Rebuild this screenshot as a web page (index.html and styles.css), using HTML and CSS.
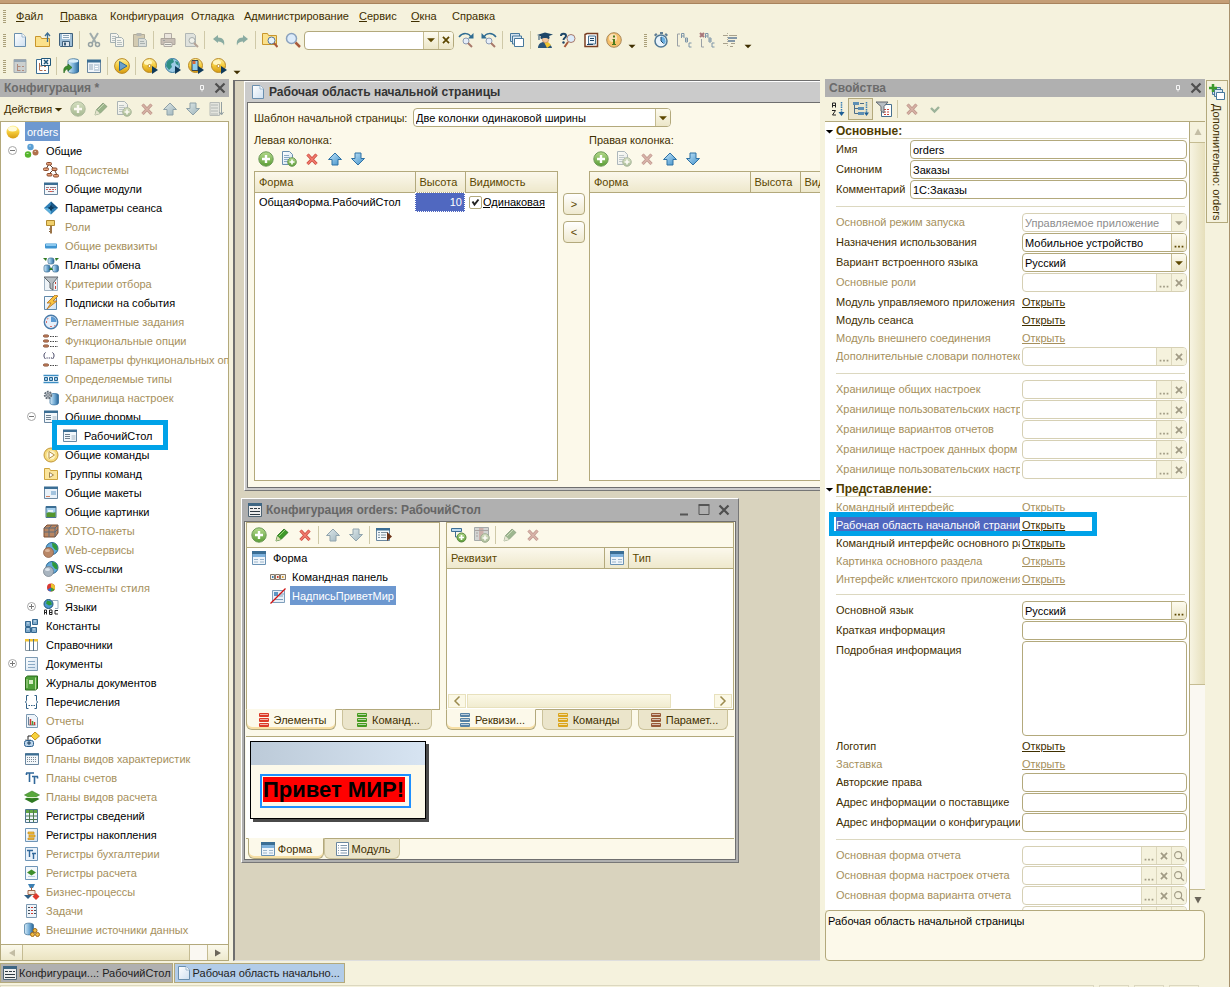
FILE: index.html
```html
<!DOCTYPE html>
<html lang="ru">
<head>
<meta charset="utf-8">
<title>Конфигуратор</title>
<link rel="stylesheet" href="styles.css">
</head>
<body>
<svg class="defs" aria-hidden="true">
<defs>
<linearGradient id="gPaper" x1="0" y1="0" x2="1" y2="1"><stop offset="0" stop-color="#fff"/><stop offset="1" stop-color="#cfe0f0"/></linearGradient>
<linearGradient id="gGold" x1="0" y1="0" x2="0" y2="1"><stop offset="0" stop-color="#fff3a0"/><stop offset=".5" stop-color="#f5cc3c"/><stop offset="1" stop-color="#d69a10"/></linearGradient>
<linearGradient id="gGreen" x1="0" y1="0" x2="0" y2="1"><stop offset="0" stop-color="#b5da8c"/><stop offset="1" stop-color="#5a9d35"/></linearGradient>
<linearGradient id="gBlue" x1="0" y1="0" x2="1" y2="1"><stop offset="0" stop-color="#c4e6fa"/><stop offset="1" stop-color="#3f8fc8"/></linearGradient>
<linearGradient id="gCyl" x1="0" y1="0" x2="1" y2="0"><stop offset="0" stop-color="#d8ecf8"/><stop offset=".5" stop-color="#79b0d8"/><stop offset="1" stop-color="#276496"/></linearGradient>
</defs>
<symbol id="doc" viewBox="0 0 16 16"><path d="M2.500 1.500h7.500l3.500 3.500v9.500h-11z" fill="url(#gPaper)" stroke="#6a8fae"/><path d="M10 1.500v3.500h3.500" fill="#fff" stroke="#9db8cf"/></symbol>
<symbol id="open" viewBox="0 0 16 16"><path d="M.5 14.500v-10h5l1 2h8v8z" fill="#fbe18a" stroke="#c9962c"/><path d="M12.500 10V2M10 4l2.500-3L15 4" fill="none" stroke="#3b6e94" stroke-width="1.300"/></symbol>
<symbol id="save" viewBox="0 0 16 16"><path d="M1.500 1.500h13v13h-12l-1-1z" fill="#9fbfd8" stroke="#3f617d"/><path d="M4 2h8v5H4z" fill="#f5f9fc"/><path d="M5 3.500h6M5 5.500h6" stroke="#8aa4b8"/><path d="M4.500 9.500h7v5h-7z" fill="#dfe7ee" stroke="#3f617d"/><path d="M6 10.500h2v3H6z" fill="#3f617d"/></symbol>
<symbol id="cut" viewBox="0 0 16 16"><path d="M4 1l6 10M12 1L6 11" stroke="#57819f" stroke-width="2"/><circle cx="4.500" cy="12.500" r="2" fill="none" stroke="#47708f" stroke-width="1.500"/><circle cx="11.500" cy="12.500" r="2" fill="none" stroke="#47708f" stroke-width="1.500"/></symbol>
<symbol id="copy" viewBox="0 0 16 16"><path d="M1.500 1.500h6l2 2v7h-8z" fill="#f4f8fc" stroke="#5f88aa"/><path d="M3 4.500h4M3 6.500h5M3 8.500h3" stroke="#7fa0bc"/><path d="M6.500 5.500h6l2 2v7h-8z" fill="#f4f8fc" stroke="#5f88aa"/><path d="M8 8.500h4M8 10.500h5M8 12.500h5" stroke="#7fa0bc"/></symbol>
<symbol id="paste" viewBox="0 0 16 16"><path d="M1.500 2.500h11v12h-11z" fill="#c9b27c" stroke="#8f7d50"/><path d="M4.500 1h5v3h-5z" fill="#8a9298"/><path d="M6.500 6.500h6l2 2v6h-8z" fill="#c2d4e4" stroke="#6b8aa5"/><path d="M8 9.500h4M8 11.500h5" stroke="#6b8aa5"/></symbol>
<symbol id="print" viewBox="0 0 16 16"><path d="M4.500 1.500h7v5h-7z" fill="#e8dcdc" stroke="#8a7a80"/><path d="M1 6.500h14v6H1z" fill="#b59a98" stroke="#86706f"/><path d="M4 10.500h8v4H4z" fill="#f3f0ee" stroke="#8a7a80"/><path d="M3 8.500h2M5 12.500h6" stroke="#5d6c80"/></symbol>
<symbol id="preview" viewBox="0 0 16 16"><path d="M2.500 1.500h8l2 2v11h-10z" fill="#ccd9e4" stroke="#7b93a6"/><circle cx="9" cy="8.500" r="3" fill="#e9f2f8" stroke="#68839a"/><path d="M11 11l4 4" stroke="#a26a5a" stroke-width="2"/></symbol>
<symbol id="undo" viewBox="0 0 16 16"><path d="M2 7l5-4v2.500c5 0 7 3 6 8-1-3-3-4-6-4V11z" fill="#8aaca2"/></symbol>
<symbol id="redo" viewBox="0 0 16 16"><path d="M14 7L9 3v2.500c-5 0-7 3-6 8 1-3 3-4 6-4V11z" fill="#8aaca2"/></symbol>
<symbol id="findf" viewBox="0 0 16 16"><path d="M.5 12.500v-11h5l1 2h8v9z" fill="#fbe18a" stroke="#c9962c"/><circle cx="9.500" cy="8.500" r="3.500" fill="#e6f2fb" stroke="#57779a"/><path d="M12 11l3.500 4" stroke="#a8593a" stroke-width="2"/></symbol>
<symbol id="find" viewBox="0 0 16 16"><circle cx="6.500" cy="6.500" r="5" fill="#dcebfa" stroke="#8ba2bd" stroke-width="1.500"/><path d="M10.500 10.500l4.500 4.500" stroke="#a8593a" stroke-width="2.500"/></symbol>
<symbol id="fnext" viewBox="0 0 16 16"><path d="M1 5c4-5 10-4 12 0" fill="none" stroke="#2f6c92" stroke-width="1.500"/><path d="M15.500 1v5.500H10z" fill="#2f6c92"/><circle cx="8" cy="9" r="3" fill="#e6eef8" stroke="#8a9ab4"/><path d="M10 11l4 4" stroke="#a8796a" stroke-width="2"/></symbol>
<symbol id="fprev" viewBox="0 0 16 16"><path d="M15 5C11 0 5 1 3 5" fill="none" stroke="#2f6c92" stroke-width="1.500"/><path d="M.5 1v5.500H6z" fill="#2f6c92"/><circle cx="8" cy="9" r="3" fill="#e6eef8" stroke="#8a9ab4"/><path d="M10 11l4 4" stroke="#a8796a" stroke-width="2"/></symbol>
<symbol id="wins" viewBox="0 0 16 16"><path d="M1.500 1.500h9v8h-9z" fill="#cfe0ee" stroke="#47789c"/><path d="M3.500 4h9v8h-9z" fill="#dbe8f3" stroke="#47789c"/><path d="M5.500 6.500h9v8h-9z" fill="#fff" stroke="#47789c"/></symbol>
<symbol id="student" viewBox="0 0 16 16"><path d="M1 16c0-4 3-6 6-6s7 2 8 6z" fill="#2a5478"/><path d="M7 10l3 6 4-3-3-3z" fill="#f2c52e"/><circle cx="8.500" cy="7.500" r="3.200" fill="#f3c9a0" stroke="#b8805a" stroke-width=".6"/><path d="M0 3l8-2.500 8 2-8 3z" fill="#1d4668"/><path d="M4 4.500h8v2c-3-1.500-5-1.500-8 0zM2 4v4" fill="#1d4668" stroke="#1d4668"/></symbol>
<symbol id="qfind" viewBox="0 0 16 16"><path d="M1 4c0-3 5-3 5 0 0 2-2.500 1.500-2.500 4" fill="none" stroke="#1d4668" stroke-width="2"/><circle cx="3.500" cy="10.500" r="1.200" fill="#1d4668"/><circle cx="11" cy="6.500" r="4" fill="#dcebfa" stroke="#a8796a"/><path d="M8 10l-3.500 5" stroke="#a8593a" stroke-width="2"/></symbol>
<symbol id="book" viewBox="0 0 16 16"><path d="M2 2.500l2-1h10.500v13H2z" fill="#fff" stroke="#7a3f22" stroke-width="1.500"/><path d="M5.500 4h7v8h-7z" fill="#eef4fa" stroke="#47708f"/><path d="M7 6.500h4M7 8.500h4M4 12.500h6" stroke="#1d4668"/></symbol>
<symbol id="info" viewBox="0 0 16 16"><circle cx="8" cy="8" r="7.300" fill="#f6c06a" stroke="#a9885a"/><circle cx="7" cy="6" r="4" fill="#fbe3b8"/><path d="M7 3.500h2v2H7zM6.500 7H9v5h1v1H6v-1h1V8h-.5z" fill="#4b7a1e"/></symbol>
<symbol id="watch" viewBox="0 0 16 16"><path d="M7 0h3v2H7zM1 3l2-2 1.500 1.500L2.500 4.500zM15 3l-2-2-1.500 1.500 2 2z" fill="#5f7d94"/><circle cx="8" cy="9" r="6" fill="#e9f4fc" stroke="#4f7896" stroke-width="1.500"/><path d="M8 9V4.500A4.500 4.500 0 0 1 11.500 12z" fill="#68aee0"/><path d="M8 5v4l2.500 2.500" fill="none" stroke="#1d4668"/></symbol>
<symbol id="abc" viewBox="0 0 16 16"><path d="M4 2H1.500v12H4" fill="none" stroke="#9aa1a6"/><path d="M5.500 6V1.500h2.500V6M5.500 4H8M9.500 6v4h2V6zM9.500 8h2M15.500 11H13v4h2.500" fill="none" stroke="#7d95a8"/></symbol>
<symbol id="abcx" viewBox="0 0 16 16"><path d="M2.500 7v8H5" fill="none" stroke="#9aa1a6"/><path d="M6.500 6V1.500H9V6M6.500 4H9M10 6v4h2V6zM10 8h2M15.500 11H13v4h2.500" fill="none" stroke="#7d95a8"/><path d="M1 1l4 4M5 1L1 5" stroke="#a8777a" stroke-width="2"/></symbol>
<symbol id="indent" viewBox="0 0 16 16"><path d="M1 3.500h4M7 3.500h8M1 11.500h4M9 11.500h4M8 14.500h3" stroke="#a8a18c"/><path d="M6 6h9M6 9h7" stroke="#8498a8" stroke-width="2"/><path d="M5.500 1v14" stroke="#b5b09c" stroke-dasharray="1 1"/></symbol>
<symbol id="treeg" viewBox="0 0 16 16"><path d="M2 1.500h12v13H2z" fill="#ccd0cf" stroke="#a2aaaf"/><path d="M2 3h12" stroke="#93a5b3" stroke-width="2"/><path d="M5.500 6v7M5.500 8.500h3M5.500 12.500h3M10 8.500h2M10 12.500h2" stroke="#b08a7a"/></symbol>
<symbol id="treex" viewBox="0 0 16 16"><path d="M1.500 1.500h12v14h-12z" fill="#fff" stroke="#3b6e94"/><path d="M4.500 5v7M4.500 8h3M4.500 12.500h3M9 8.500h2M9 12.500h2" stroke="#b06a4a"/><path d="M6.500.5h9v7h-9z" fill="#f2f7fb" stroke="#1f5579"/><path d="M9 2l4 4M13 2L9 6" stroke="#1f5579" stroke-width="1.500"/></symbol>
<symbol id="dbup" viewBox="0 0 16 16"><path d="M5 3c0-3 11-3 11 0v10c0 3-11 3-11 0z" fill="url(#gCyl)" stroke="#2f668f" stroke-width=".7"/><ellipse cx="10.500" cy="3" rx="5" ry="1.700" fill="#d9edf8"/><path d="M1 15c-1-5 1-7 4-7V6l4 3.500L5 13v-2c-2 0-3 1-4 4z" fill="#3d8c2f" stroke="#23651b" stroke-width=".6"/></symbol>
<symbol id="formw" viewBox="0 0 16 16"><path d="M1.500 2.500h13v12h-13z" fill="#f0f5fa" stroke="#6a87a0"/><path d="M1 1.500h14v3H1z" fill="#3b6e94"/><path d="M3 7h4M3 9h4M3 11h4" stroke="#93a7b8"/><path d="M8 6h5.500v7H8z" fill="#c5d3df"/><path d="M9 8.500h3M9 10.500h3" stroke="#fff"/></symbol>
<symbol id="play" viewBox="0 0 16 16"><circle cx="8" cy="8" r="7.400" fill="url(#gGold)" stroke="#b98a28"/><path d="M5.500 3.500L13 8l-7.500 4.500z" fill="#6aa0cc" stroke="#2f6c9a"/></symbol>
<symbol id="runcd" viewBox="0 0 16 16"><circle cx="7.500" cy="7.500" r="7" fill="url(#gGold)" stroke="#b98a28"/><ellipse cx="6" cy="4.500" rx="4" ry="2.500" fill="#fff6c0"/><circle cx="7.500" cy="8" r="1.500" fill="#fff" stroke="#b98a28"/><path d="M10 8l6 4-6 4z" fill="#0f3a5a"/></symbol>
<symbol id="runweb" viewBox="0 0 16 16"><circle cx="7.500" cy="7.500" r="7" fill="#9ccbe6" stroke="#37799e"/><path d="M2 4c2-3 5-3 6-3l1 3-3 2 1 3-3 3-3-4zM10 3l3 1 1 4-3-2z" fill="#2f8f84"/><path d="M10 8l6 4-6 4z" fill="#0f3a5a"/></symbol>
<symbol id="runmob" viewBox="0 0 16 16"><circle cx="7.500" cy="7.500" r="7" fill="url(#gGold)" stroke="#b98a28"/><path d="M4 2.500h6v10H4z" fill="#8fd0ef" stroke="#3a4750"/><path d="M4.500 3h3v3h-3z" fill="#d96a3a"/><path d="M10 8l6 4-6 4z" fill="#0f3a5a"/></symbol>
<symbol id="add" viewBox="0 0 16 16"><circle cx="8" cy="8" r="7.200" fill="url(#gGreen)" stroke="#6d9a58"/><path d="M8 4v8M4 8h8" stroke="#fff" stroke-width="2.400"/></symbol>
<symbol id="pencil" viewBox="0 0 16 16"><path d="M2 14l1.500-5.500L10 2l4 3.500-7 7z" fill="#3f9a2a" stroke="#256b1a" stroke-width=".8"/><path d="M2 14l1.500-5L7 12.500z" fill="#d9ddb0"/><path d="M5 9l6-6" stroke="#9bd27a"/></symbol>
<symbol id="docadd" viewBox="0 0 16 16"><path d="M1.500.5h7l3 3v10h-10z" fill="url(#gPaper)" stroke="#6a8fae"/><path d="M3 4.500h5M3 6.500h6M3 8.500h4M3 10.500h4" stroke="#8aa9c4"/><circle cx="11" cy="11" r="4.300" fill="url(#gGreen)" stroke="#6d9a58"/><path d="M11 8.500v5M8.500 11h5" stroke="#fff" stroke-width="1.600"/></symbol>
<symbol id="del" viewBox="0 0 16 16"><path d="M3.500 3.500l9 9.500M12.500 3.500l-9 9.500" stroke="#c9483e" stroke-width="3.200"/><path d="M3.500 3.500l9 9.500M12.500 3.500l-9 9.500" stroke="#f07a6c" stroke-width="1.800"/></symbol>
<symbol id="up" viewBox="0 0 16 16"><path d="M8 2l6.500 6.500H11V14H5V8.500H1.500z" fill="url(#gBlue)" stroke="#2f72a5"/></symbol>
<symbol id="down" viewBox="0 0 16 16"><path d="M8 14L1.500 7.500H5V2h6v5.500h3.500z" fill="url(#gBlue)" stroke="#2f72a5"/></symbol>
<symbol id="sortl" viewBox="0 0 16 16"><path d="M2 1.500h9.500v13H2z" fill="#d5dde4" stroke="#8698a8"/><path d="M3 4h7M3 7h7M3 10h7M3 13h7" stroke="#7e92a4"/><path d="M13.500 1v12M11.500 11l2 3 2-3" fill="none" stroke="#3f6f95"/></symbol>
<symbol id="gold" viewBox="0 0 16 16"><circle cx="8" cy="8" r="6.500" fill="url(#gGold)"/><ellipse cx="7.500" cy="5" rx="4.500" ry="2.500" fill="#fffbd8"/></symbol>
<symbol id="common" viewBox="0 0 16 16"><circle cx="6.500" cy="4" r="3.200" fill="#5a9fd4"/><circle cx="4" cy="11.500" r="3.200" fill="#55b52c"/><circle cx="11.500" cy="9.500" r="3" fill="#b0714c"/><path d="M5 3h2M2.500 10.500h2M10.500 8.500h1.500" stroke="#fff" opacity=".6"/></symbol>
<symbol id="subsys" viewBox="0 0 16 16"><path d="M6 2L3 7M6 2l5 5M11 7l-5 5M11 7l3 6" stroke="#5b4030"/><g fill="#e7a27c" stroke="#8a4a2c"><rect x="3.500" y=".5" width="5" height="2.500" rx="1"/><rect x=".5" y="6" width="5" height="2.500" rx="1"/><rect x="9" y="6" width="5" height="2.500" rx="1"/><rect x="4" y="11.500" width="5" height="2.500" rx="1"/><rect x="10.500" y="12.500" width="5" height="2.500" rx="1"/></g></symbol>
<symbol id="module" viewBox="0 0 16 16"><path d="M1.500 2.500h13v11h-13z" fill="#f2f7fb" stroke="#6a87a0"/><path d="M1 1.500h14v2.500H1z" fill="#3b6e94"/><path d="M3 6.500h3M7 6.500h6M5 10.500h6" stroke="#8e7a86"/><path d="M3 8.500h10M7 10.500h2" stroke="#e0584c" stroke-dasharray="2 1"/></symbol>
<symbol id="diamond" viewBox="0 0 16 16"><path d="M8 1.500l7 6.500-7 6.500L1 8z" fill="#2f7fb5"/><path d="M8 1.500L15 8H8z" fill="#1a5888"/><path d="M1 8h7v6.500z" fill="#5fb0dc"/><path d="M8 5.500v5M5.500 8h5" stroke="#0d3c60" stroke-width="2"/></symbol>
<symbol id="key" viewBox="0 0 16 16"><path d="M3.500 1.500h8v5h-8z" fill="#f0cf6c" stroke="#b08a30"/><path d="M7 7h2v7.500H7z" fill="#9a7448"/><path d="M6 10h1M6 12.500h1" stroke="#7a5a38"/></symbol>
<symbol id="bar" viewBox="0 0 16 16"><rect x="2" y="5.500" width="12" height="5" rx="1" fill="#3f94d0"/><path d="M3 7h10" stroke="#a5dafa" stroke-width="1.500"/></symbol>
<symbol id="exch" viewBox="0 0 16 16"><g fill="url(#gCyl)" stroke="#3a6d93" stroke-width=".7"><rect x="5" y="1" width="6" height="6" rx="2"/><rect x="1" y="8" width="6" height="7" rx="2"/><rect x="9.500" y="8" width="6" height="7" rx="2"/></g><path d="M0 1h4L3 4zM16 1h-4l1 3zM8 10l-2 3h4z" fill="#2f7a22"/></symbol>
<symbol id="filter" viewBox="0 0 16 16"><path d="M1.500 2.500h13v12h-13z" fill="#eef3f7" stroke="#9fb2c2"/><path d="M1 1h14l-5 6v7l-3-2V7z" fill="#b8bfc4" stroke="#62696e"/><path d="M12.500 6v2M12.500 10v3" stroke="#c9463a"/></symbol>
<symbol id="bolt" viewBox="0 0 16 16"><path d="M1.500 1.500h12v13h-12z" fill="url(#gPaper)" stroke="#5f88aa"/><path d="M12 0L4 8h4l-4 6 10-8h-4l5-5z" fill="#f9c440" stroke="#b3701e" stroke-width=".8"/></symbol>
<symbol id="clock" viewBox="0 0 16 16"><circle cx="8" cy="8" r="6.700" fill="#e6effa" stroke="#4a7cab" stroke-width="1.400"/><path d="M8 8V2.500A5.500 5.500 0 0 1 13.500 8z" fill="#5c9ad2"/><path d="M3 8h1M8 12v1M4.500 4.500l.5.500M11.500 11.500l.5.500" stroke="#d94c42" stroke-width="1.500"/></symbol>
<symbol id="fopt" viewBox="0 0 16 16"><g fill="#e09c78" stroke="#7d4327"><rect x=".5" y="2" width="5" height="2" rx="1"/><rect x=".5" y="7" width="5" height="2" rx="1"/><rect x=".5" y="12" width="5" height="2" rx="1"/></g><path d="M7 3.500h8M7 8.500h8M7 13.500h8" stroke="#444" stroke-dasharray="1.500 1"/></symbol>
<symbol id="fparam" viewBox="0 0 16 16"><path d="M2.500.5C.5 2 .5 5 2.500 7M9.500.5c2 1.500 2 4.500 0 6.500" fill="none" stroke="#335"/><path d="M3.500 6h6" stroke="#335" stroke-dasharray="1.200 1"/><rect x=".5" y="12" width="5" height="2" rx="1" fill="#e09c78" stroke="#7d4327"/><path d="M7 13.500h8" stroke="#444" stroke-dasharray="1.500 1"/></symbol>
<symbol id="types" viewBox="0 0 16 16"><path d="M.5 4.500h15M.5 11.500h15" stroke="#3d8fc5" stroke-width="1.500"/><g fill="#9dcdee" stroke="#25638f"><path d="M1.500 6.500h3v3h-3zM6.500 6.500h3v3h-3zM11.500 6.500h3v3h-3z"/></g></symbol>
<symbol id="store" viewBox="0 0 16 16"><path d="M7 5c0-2 8.500-2 8.500 0v8c0 2.500-8.500 2.500-8.500 0z" fill="url(#gCyl)" stroke="#2a6a9c" stroke-width=".7"/><circle cx="5" cy="5" r="3.300" fill="#c6ccd2" stroke="#646e78" stroke-width="1.800" stroke-dasharray="1.800 1"/><circle cx="5" cy="5" r="1.300" fill="#fff" stroke="#646e78"/></symbol>
<symbol id="form" viewBox="0 0 16 16"><path d="M1.500 2.500h13v11h-13z" fill="#f2f7fb" stroke="#6a87a0"/><path d="M1 1.500h14v2.500H1z" fill="#3b6e94"/><path d="M3 6.500h5M3 8.500h5M3 10.500h5" stroke="#6f808e"/><path d="M9.500 7h4v5h-4z" fill="#cbd6df"/></symbol>
<symbol id="gcmd" viewBox="0 0 16 16"><circle cx="8" cy="8" r="7" fill="#f5da7c" stroke="#c2983a"/><circle cx="8" cy="8" r="4.500" fill="#fdf2c4"/><path d="M6 4.500l5.500 3.500L6 11.500z" fill="#fff" stroke="#b8923f"/></symbol>
<symbol id="gfold" viewBox="0 0 16 16"><path d="M1.500 13.500v-11h5l1 2h7v9z" fill="#fbe59c" stroke="#cda43e"/><path d="M6.500 6.500l4 2.500-4 2.500z" fill="#fff" stroke="#a08550"/></symbol>
<symbol id="layout" viewBox="0 0 16 16"><path d="M1.500 2.500h13v11h-13z" fill="#eaf2f9" stroke="#6a87a0"/><path d="M1 1.500h14v2.500H1z" fill="#3b6e94"/><path d="M8 7h5M8 9h5" stroke="#5c95c4"/><path d="M3 11.500h4" stroke="#d08060"/></symbol>
<symbol id="pic" viewBox="0 0 16 16"><path d="M3 2.500h10v11H3z" fill="#a6d0ee" stroke="#4a7393"/><path d="M3 3h10" stroke="#3b6e94" stroke-width="2"/><path d="M3.500 9c3-2 6 1 9-1v5h-9z" fill="#54962e"/><path d="M5 7h5" stroke="#fff" stroke-width="1.500"/></symbol>
<symbol id="xdto" viewBox="0 0 16 16"><path d="M1 5l3-3h11v8l-3 4H1z" fill="#b98662" stroke="#7d4f33"/><path d="M1 5h11v9M12 5l3-3M6 5v9M6 5l3-3M1 9h11l3-3" fill="none" stroke="#5c6a78"/></symbol>
<symbol id="websvc" viewBox="0 0 16 16"><circle cx="9" cy="6.500" r="6" fill="#63a8d8" stroke="#26648f"/><path d="M9 1c4 0 6 3 5.500 7-3 1-3-2-5-3z" fill="#2f9a3a"/><circle cx="5.500" cy="10.500" r="5" fill="#b98767" stroke="#86583c" stroke-width=".7"/><ellipse cx="4.500" cy="8.500" rx="2.500" ry="1.500" fill="#dcb79c"/></symbol>
<symbol id="wsref" viewBox="0 0 16 16"><circle cx="9" cy="6.500" r="6" fill="#63a8d8" stroke="#26648f"/><path d="M9 1c4 0 6 3 5.500 7-3 1-3-2-5-3z" fill="#2f9a3a"/><circle cx="5.500" cy="10.500" r="5" fill="#a9b5c0" stroke="#6b7985" stroke-width=".7"/><ellipse cx="4.500" cy="8.500" rx="2.500" ry="1.500" fill="#dce3e9"/></symbol>
<symbol id="style" viewBox="0 0 16 16"><circle cx="8" cy="7.500" r="4" fill="#d83a34"/><path d="M8 7.500V3.500a4 4 0 0 1 3.500 6z" fill="#e9c52c"/><path d="M8 7.500l3.500 2a4 4 0 0 1-3.500 2z" fill="#3aa33c"/><path d="M8 7.500v4a4 4 0 0 1-3.500-2z" fill="#2f6fd0"/></symbol>
<symbol id="lang" viewBox="0 0 16 16"><path d="M9 1.500h6v8h-3" fill="#fff" stroke="#9fb2c2"/><circle cx="5.500" cy="5" r="4.500" fill="#4a97cf" stroke="#1f5579"/><path d="M4 1.500l4 1 1 3-3 1-3-2z" fill="#2f9a3a"/><path d="M1.500 15.500v-4.500h2v4.500M1.500 13.500h2M6.500 11v4.500h2.500v-4.500zM6.500 13.500h2.500M15 11.500h-3v3.500h3" fill="none" stroke="#222"/></symbol>
<symbol id="const" viewBox="0 0 16 16"><g fill="#7fa9c9" stroke="#356891"><path d="M1.500 3.500h5v5h-5zM1.500 9.500h5v5h-5zM7.500 9.500h5v5h-5zM8.500 1.500h5v5h-5z"/></g><path d="M3 5h2M3 11h2M9 11h2M10 3h2" stroke="#d2e6f5"/></symbol>
<symbol id="ref" viewBox="0 0 16 16"><path d="M1.500 2.500h12v11h-12z" fill="#fff" stroke="#8a98a2"/><path d="M1 2h13v2.500H1z" fill="#f3c432"/><path d="M5.500 2v12M9.500 2v12" stroke="#56748c"/></symbol>
<symbol id="docs" viewBox="0 0 16 16"><path d="M1.500 1.500h12v13h-12z" fill="url(#gPaper)" stroke="#7d9ab3"/><path d="M4 5.500h7M4 8.500h7M4 11.500h7" stroke="#8aa9c4"/></symbol>
<symbol id="journal" viewBox="0 0 16 16"><path d="M1.500 2.500l2-1.500h10v12.500l-2 1.500h-10z" fill="#4fa03a" stroke="#2a6a1c"/><path d="M11.500 2.500v12M3 4v9" stroke="#b7dd9c"/><path d="M5 5h4v4H5z" fill="#d8eec8"/></symbol>
<symbol id="enum" viewBox="0 0 16 16"><path d="M4.500 1.500h-2v5l-1 1.500 1 1.500v5h2M10.500 1.500h2v5l1 1.500-1 1.500v5h-2" fill="none" stroke="#2f5f85"/><path d="M4.500 11.500h7" stroke="#2f5f85" stroke-dasharray="1.500 1"/></symbol>
<symbol id="report" viewBox="0 0 16 16"><path d="M2.500 1.500h8l3 3v10h-11z" fill="#eef4fa" stroke="#7d9ab3"/><path d="M4.500 4v8h7" fill="none" stroke="#6a8297"/><path d="M6.500 6v6M10.500 9v3" stroke="#d0392e" stroke-width="1.500"/><path d="M8.500 8v4" stroke="#4e9a3a" stroke-width="1.500"/></symbol>
<symbol id="proc" viewBox="0 0 16 16"><path d="M11 0l4.500 4L11 8 7 4z" fill="#f7d23c" stroke="#c79520"/><path d="M7 4H4v5M2 7.500l2 2.500 2-2.500" fill="none" stroke="#222"/><rect x=".5" y="8.500" width="9" height="6" rx="2" fill="#b9d3ea" stroke="#2a5f8e"/><path d="M5 9v4M3 11h4" stroke="#173b5a"/></symbol>
<symbol id="chars" viewBox="0 0 16 16"><path d="M1.500 2.500h13v11h-13z" fill="#f4f8fb" stroke="#6a87a0"/><path d="M1 2.500h14v2H1z" fill="#3b6e94"/><path d="M3 6.500h10M3 8.500h10M3 10.500h10" stroke="#7d8a95" stroke-dasharray="1 1"/></symbol>
<symbol id="tt" viewBox="0 0 16 16"><path d="M2 3h8M5.500 3v9M2.500 3v2M8 6.500h6M10.500 6.500V14M13.500 6.500v2" fill="none" stroke="#31689a" stroke-width="1.600"/></symbol>
<symbol id="calc" viewBox="0 0 16 16"><path d="M8 6l7.500 4L8 14 .5 10z" fill="#2f7a22"/><path d="M8 2l7.500 4L8 10 .5 6z" fill="#58a83c" stroke="#3a8026" stroke-width=".6"/><path d="M3 8.500h10" stroke="#dff0d0"/></symbol>
<symbol id="reginf" viewBox="0 0 16 16"><path d="M1.500 1.500h12v13h-12z" fill="#eef4fa" stroke="#4f7690"/><path d="M2 2h11v3H2z" fill="#61a643"/><path d="M5.500 2v12M9.500 2v12M2 8h11M2 11.500h11" stroke="#4d7a52"/></symbol>
<symbol id="regacc" viewBox="0 0 16 16"><path d="M1.500 1.500h12v13h-12z" fill="url(#gPaper)" stroke="#6f96b8"/><path d="M4 5h6v2H4zM5 8h6v2H5zM4 11h6v1.500H4z" fill="#f5c23a" stroke="#c48a1c" stroke-width=".7"/></symbol>
<symbol id="regtt" viewBox="0 0 16 16"><path d="M1.500 1.500h12v13h-12z" fill="#eaf2fa" stroke="#6f96b8"/><path d="M3 4.500h6M5.500 4.500V11M8 7.500h4M9.500 7.500V13" stroke="#31689a" stroke-width="1.400"/></symbol>
<symbol id="regcalc" viewBox="0 0 16 16"><path d="M1.500 1.500h12v13h-12z" fill="#f4f8fb" stroke="#6f96b8"/><path d="M7.500 4.500l4.500 3-4.500 3-4.500-3z" fill="#3f8f2c"/><path d="M4 11.500h7" stroke="#b9d0e2"/></symbol>
<symbol id="bproc" viewBox="0 0 16 16"><path d="M4 0h7l-2 4H6z" fill="#3b7fb3"/><path d="M7.500 3v4M4 6.500h7v4H4z" fill="#f6e8dc" stroke="#a3674a"/><path d="M0 11h8l-4 4z" fill="#2f5f85"/><path d="M12 9l3.500 3.500L12 16l-3.500-3.500z" fill="#e0392c"/></symbol>
<symbol id="tasks" viewBox="0 0 16 16"><path d="M2.500 1.500h10v13h-10z" fill="#eef4fa" stroke="#7d9ab3"/><path d="M4 4.500h2M4 7.500h2M4 10.500h2M10 4.500h2M10 7.500h2M10 10.500h2" stroke="#44505c"/><path d="M7 4.500h2M7 10.500h2M7 7.500h2" stroke="#d0392e"/></symbol>
<symbol id="ext" viewBox="0 0 16 16"><path d="M.5 3c0-2.500 9-2.500 9 0v8c0 2.500-9 2.500-9 0z" fill="url(#gCyl)" stroke="#3a6d93" stroke-width=".7"/><g fill="#f2bd42" stroke="#a06a18"><circle cx="11" cy="8.500" r="2"/><circle cx="8.500" cy="12.500" r="2"/><circle cx="13.500" cy="12.500" r="2"/></g></symbol>
<symbol id="winf" viewBox="0 0 16 16"><path d="M1.500 1.500h13v13h-13z" fill="#eee" stroke="#4f6474"/><path d="M1 1h14v3H1z" fill="#3f6683"/><path d="M3 6.500h3M7 6.500h3M11 6.500h2M3 9.500h10M3 12.500h10" stroke="#2f3a42"/></symbol>
<symbol id="formb" viewBox="0 0 16 16"><path d="M1.500 1.500h13v13h-13z" fill="#eff5fa" stroke="#6a92b4"/><path d="M1 1h14v3H1z" fill="#3b6e94"/><path d="M2 4h12v3H2z" fill="#7fb2dc"/><path d="M3 9.500h4M9 9.500h4M3 12h4M9 12h4" stroke="#9cb5ca"/></symbol>
<symbol id="cmdbar" viewBox="0 0 16 16"><path d="M.5 5.500h4v5h-4zM5.500 5.500h4v5h-4zM10.500 5.500h5v5h-5z" fill="#f3f0ea" stroke="#85796b"/><path d="M2 8h1.500" stroke="#3b7fb3" stroke-width="2"/><path d="M7 8h1.500" stroke="#d0392e" stroke-width="2"/><path d="M12 8h1.500" stroke="#e0a030" stroke-width="2"/></symbol>
<symbol id="label" viewBox="0 0 16 16"><path d="M2.500 2.500h12v12h-12z" fill="#e8f0f8" stroke="#7f9fbc"/><path d="M4 4h4v4H4z" fill="#5c95c4"/><path d="M9 6h5M9 8h4M5 11.500h8" stroke="#7f9fbc"/><path d="M.5 15.500l15-15" stroke="#d01010" stroke-width="1.300"/></symbol>
<symbol id="formgo" viewBox="0 0 16 16"><path d="M.5 1.500h13v12H.5z" fill="#f2f7fb" stroke="#6a87a0"/><path d="M0 1h14v2.500H0z" fill="#3b6e94"/><path d="M2 5.500h2M5 5.500h7M2 8h2M5 8h5M2 10.500h2M5 10.500h5" stroke="#7d8f9e"/><path d="M11 5l5 4.500-5 4.500z" fill="#6d3318"/></symbol>
<symbol id="attradd" viewBox="0 0 16 16"><path d="M.5 1.500h10v3H.5z" fill="#b9d8ef" stroke="#3b6e94"/><path d="M4.500 5v5h3" fill="none" stroke="#3b6e94"/><circle cx="10.500" cy="10.500" r="4.500" fill="url(#gGreen)" stroke="#54853c"/><path d="M10.500 8v5M8 10.500h5" stroke="#fff" stroke-width="1.700"/></symbol>
<symbol id="coladd" viewBox="0 0 16 16"><path d="M.5.500h14v13H.5z" fill="#b5bfcc" stroke="#65778a"/><path d="M5 1h4.500v12H5z" fill="#d07878"/><path d="M1 3.500h13M2 6h2M2 9h2" stroke="#7d6675"/><circle cx="11" cy="11" r="4.300" fill="url(#gGreen)" stroke="#54853c"/><path d="M11 8.500v5M8.500 11h5" stroke="#fff" stroke-width="1.600"/></symbol>
<symbol id="stack" viewBox="0 0 16 16"><g fill="currentColor"><rect x="3" y="1" width="10" height="4" rx="1"/><rect x="3" y="6" width="10" height="4" rx="1"/><rect x="3" y="11" width="10" height="4" rx="1"/></g><path d="M4 2.500h8M4 7.500h8M4 12.500h8" stroke="#fff" opacity=".6"/></symbol>
<symbol id="text" viewBox="0 0 16 16"><path d="M2.500 1.500h12v13h-12z" fill="#fff" stroke="#6a87a0"/><path d="M4 4.500h1M6.500 4.500H13M4 7h1M6.500 7H13M4 9.500h1M6.500 9.500H13M4 12h1M6.500 12H13" stroke="#7f96ac"/></symbol>
<symbol id="az" viewBox="0 0 16 16"><path d="M2.500 6.500V2h3v4.500M2.500 4.500h3M2 9.500h3.500L2.500 14H6" fill="none" stroke="#222"/><path d="M11.500 1v11" stroke="#3b7fb3" stroke-width="1.500" stroke-dasharray="1.500 .8"/><path d="M8.500 11h6l-3 4z" fill="#1f5f95"/></symbol>
<symbol id="cat" viewBox="0 0 16 16"><path d="M0 1h6v3H0zM5 6h6v3H5zM5 11h6v3H5z" fill="#5d8fb5"/><path d="M1.500 4v8.500H5M1.500 7.500H5M7 2.500h4" fill="none" stroke="#4c6c86"/><path d="M13.500 1v12" stroke="#3b7fb3" stroke-width="1.500" stroke-dasharray="1.500 .8"/><path d="M11 11.500h5L13.500 15z" fill="#1f5f95"/></symbol>
<symbol id="filt2" viewBox="0 0 16 16"><path d="M5.500 3.500h10v12h-10z" fill="#fff" stroke="#47708f"/><path d="M8 8.500h6M8 11h6M8 13.500h6" stroke="#c9463a" stroke-dasharray="2 1"/><path d="M0 1h12L8 5.500V12l-3-2V5.500z" fill="#b8bfc4" stroke="#62696e"/></symbol>
<symbol id="ok" viewBox="0 0 16 16"><path d="M4 7l3.500 3.500L12 6" fill="none" stroke="#9cb39a" stroke-width="2.400"/></symbol>
<symbol id="more" viewBox="0 0 16 16"><path d="M4 6.500h8l-4 4z" fill="#3f2f00"/></symbol>
<symbol id="xs" viewBox="0 0 16 16"><path d="M4.500 4.500l7 7M11.500 4.500l-7 7" stroke="currentColor" stroke-width="2"/></symbol>
<symbol id="dots" viewBox="0 0 16 16"><path d="M3 11h2v2H3zM7 11h2v2H7zM11 11h2v2h-2z" fill="currentColor"/></symbol>
<symbol id="mag" viewBox="0 0 16 16"><circle cx="7" cy="7" r="4" fill="none" stroke="currentColor" stroke-width="1.300"/><path d="M10 10l3.500 3.500" stroke="currentColor" stroke-width="1.600"/></symbol>
<symbol id="dd" viewBox="0 0 16 16"><path d="M3.500 6h9L8 10.500z" fill="currentColor"/></symbol>
<symbol id="close" viewBox="0 0 16 16"><path d="M3.500 3.500l9 9M12.500 3.500l-9 9" stroke="#4f4f4f" stroke-width="2.200"/></symbol>
<symbol id="maxi" viewBox="0 0 16 16"><path d="M3 3.500h10v9H3z" fill="none" stroke="#555"/><path d="M2.500 3h11" stroke="#555" stroke-width="2"/></symbol>
<symbol id="mini" viewBox="0 0 16 16"><path d="M4 12.500h8" stroke="#555" stroke-width="2"/></symbol>
<symbol id="pin" viewBox="0 0 16 16"><path d="M6.500 5.500h3v4h-3zM8 9.500v2" fill="none" stroke="#f5f5f5"/></symbol>
<symbol id="plus" viewBox="0 0 15 15"><circle cx="7.500" cy="7.500" r="4" fill="#fff" stroke="#a6a6a6"/><path d="M5 7.500h5M7.500 5v5" stroke="#777"/></symbol>
<symbol id="minus" viewBox="0 0 15 15"><circle cx="7.500" cy="7.500" r="4" fill="#fff" stroke="#a6a6a6"/><path d="M5 7.500h5" stroke="#777"/></symbol>
<symbol id="wadd" viewBox="0 0 16 16"><path d="M3.500 3.500h8v7h-8z" fill="#cfe0ee" stroke="#47789c"/><path d="M5.500 5.500h8v7h-8z" fill="#dbe8f3" stroke="#47789c"/><path d="M7.500 8.500h8v7h-8z" fill="#fff" stroke="#47789c"/><path d="M4 0v8M0 4h8" stroke="#3d9a2c" stroke-width="2.500"/></symbol>
<symbol id="al" viewBox="0 0 16 16"><path d="M11 4.500v7L5 8z" fill="currentColor"/></symbol>
<symbol id="ar" viewBox="0 0 16 16"><path d="M5 4.500v7L11 8z" fill="currentColor"/></symbol>
<symbol id="au" viewBox="0 0 16 16"><path d="M4.500 11h7L8 4.500z" fill="currentColor"/></symbol>
<symbol id="ad" viewBox="0 0 16 16"><path d="M4.500 5h7L8 11.500z" fill="currentColor"/></symbol>
<symbol id="cl" viewBox="0 0 16 16"><path d="M10.500 3.500L6 8l4.500 4.500" fill="none" stroke="#9c8b4e" stroke-width="1.500"/></symbol>
<symbol id="cr" viewBox="0 0 16 16"><path d="M5.500 3.500L10 8l-4.500 4.500" fill="none" stroke="#9c8b4e" stroke-width="1.500"/></symbol>
</svg>

<div class="strip"></div>
<header class="top">
<nav class="menu"><span class="grip"></span>
<a href="#"><u>Ф</u>айл</a><a href="#"><u>П</u>равка</a><a href="#">Конфигурация</a><a href="#">Отладка</a><a href="#">Администрирование</a><a href="#"><u>С</u>ервис</a><a href="#"><u>О</u>кна</a><a href="#">Справка</a></nav>
<div class="bar"><span class="grip"></span>
<button class="tb" aria-label="Новый"><svg><use href="#doc"/></svg></button><button class="tb" aria-label="Открыть файл"><svg><use href="#open"/></svg></button><button class="tb" aria-label="Сохранить"><svg><use href="#save"/></svg></button><i class="sep"></i>
<button class="tb off" aria-label="Вырезать"><svg><use href="#cut"/></svg></button><button class="tb off" aria-label="Копировать"><svg><use href="#copy"/></svg></button><button class="tb off" aria-label="Вставить"><svg><use href="#paste"/></svg></button><i class="sep"></i>
<button class="tb off" aria-label="Печать"><svg><use href="#print"/></svg></button><button class="tb off" aria-label="Просмотр"><svg><use href="#preview"/></svg></button><i class="sep"></i>
<button class="tb" aria-label="Отменить"><svg><use href="#undo"/></svg></button><button class="tb" aria-label="Вернуть"><svg><use href="#redo"/></svg></button><i class="sep"></i>
<button class="tb" aria-label="Глобальный поиск"><svg><use href="#findf"/></svg></button><button class="tb" aria-label="Найти"><svg><use href="#find"/></svg></button>
<span class="combo search"><input aria-label="Строка поиска"><button aria-label="История"><svg><use href="#dd"/></svg></button><button aria-label="Очистить"><svg><use href="#xs"/></svg></button></span>
<button class="tb" aria-label="Найти далее"><svg><use href="#fnext"/></svg></button><button class="tb" aria-label="Найти ранее"><svg><use href="#fprev"/></svg></button><i class="sep"></i>
<button class="tb" aria-label="Окна"><svg><use href="#wins"/></svg></button><i class="sep"></i>
<button class="tb" aria-label="Синтаксис-помощник"><svg><use href="#student"/></svg></button><button class="tb" aria-label="Поиск в справке"><svg><use href="#qfind"/></svg></button><button class="tb" aria-label="Содержание"><svg><use href="#book"/></svg></button><button class="tb" aria-label="О программе"><svg><use href="#info"/></svg></button><button class="tb more" aria-label="Ещё"><svg><use href="#more"/></svg></button>
<span class="grip"></span>
<button class="tb" aria-label="Замер"><svg><use href="#watch"/></svg></button><button class="tb" aria-label="Блок"><svg><use href="#abc"/></svg></button><button class="tb" aria-label="Убрать блок"><svg><use href="#abcx"/></svg></button><button class="tb" aria-label="Формат"><svg><use href="#indent"/></svg></button><button class="tb more" aria-label="Ещё"><svg><use href="#more"/></svg></button>
</div>
<div class="bar"><span class="grip"></span>
<button class="tb" aria-label="Открыть конфигурацию"><svg><use href="#treeg"/></svg></button><button class="tb" aria-label="Закрыть конфигурацию"><svg><use href="#treex"/></svg></button><i class="sep"></i>
<button class="tb" aria-label="Обновить базу"><svg><use href="#dbup"/></svg></button><button class="tb" aria-label="Окно конфигурации"><svg><use href="#formw"/></svg></button><i class="sep"></i>
<button class="tb" aria-label="Начать отладку"><svg><use href="#play"/></svg></button><i class="sep"></i>
<button class="tb" aria-label="Толстый клиент"><svg><use href="#runcd"/></svg></button><button class="tb" aria-label="Веб-клиент"><svg><use href="#runweb"/></svg></button><button class="tb" aria-label="Мобильный клиент"><svg><use href="#runmob"/></svg></button><button class="tb" aria-label="Тонкий клиент"><svg><use href="#runcd"/></svg></button><button class="tb more" aria-label="Ещё"><svg><use href="#more"/></svg></button>
</div>
</header>

<main class="work">
<section class="panel">
<h2 class="ptitle"><span>Конфигурация *</span><button class="tb" aria-label="Закрепить"><svg><use href="#pin"/></svg></button><button class="tc" aria-label="Закрыть"><svg><use href="#close"/></svg></button></h2>
<div class="ptools"><button class="act">Действия<svg><use href="#dd"/></svg></button>
<button class="tb off" aria-label="Добавить"><svg><use href="#add"/></svg></button><button class="tb off" aria-label="Изменить"><svg><use href="#pencil"/></svg></button><button class="tb off" aria-label="Скопировать"><svg><use href="#docadd"/></svg></button><button class="tb off" aria-label="Удалить"><svg><use href="#del"/></svg></button><button class="tb off" aria-label="Вверх"><svg><use href="#up"/></svg></button><button class="tb off" aria-label="Вниз"><svg><use href="#down"/></svg></button><button class="tb off" aria-label="Сортировать"><svg><use href="#sortl"/></svg></button></div>
<div class="treebox">
<ul class="tree">
<li class="sel"><svg><use href="#gold"/></svg><span>orders</span></li>
<li class="d1"><svg class="ex"><use href="#minus"/></svg><svg><use href="#common"/></svg><span>Общие</span></li>
<li class="d2 dim"><svg><use href="#subsys"/></svg><span>Подсистемы</span></li>
<li class="d2"><svg><use href="#module"/></svg><span>Общие модули</span></li>
<li class="d2"><svg><use href="#diamond"/></svg><span>Параметры сеанса</span></li>
<li class="d2 dim"><svg><use href="#key"/></svg><span>Роли</span></li>
<li class="d2 dim"><svg><use href="#bar"/></svg><span>Общие реквизиты</span></li>
<li class="d2"><svg><use href="#exch"/></svg><span>Планы обмена</span></li>
<li class="d2 dim"><svg><use href="#filter"/></svg><span>Критерии отбора</span></li>
<li class="d2"><svg><use href="#bolt"/></svg><span>Подписки на события</span></li>
<li class="d2 dim"><svg><use href="#clock"/></svg><span>Регламентные задания</span></li>
<li class="d2 dim"><svg><use href="#fopt"/></svg><span>Функциональные опции</span></li>
<li class="d2 dim"><svg><use href="#fparam"/></svg><span>Параметры функциональных опций</span></li>
<li class="d2 dim"><svg><use href="#types"/></svg><span>Определяемые типы</span></li>
<li class="d2 dim"><svg><use href="#store"/></svg><span>Хранилища настроек</span></li>
<li class="d2"><svg class="ex"><use href="#minus"/></svg><svg><use href="#form"/></svg><span>Общие формы</span></li>
<li class="d3 marked"><svg><use href="#form"/></svg><span>РабочийСтол</span><b class="callout"></b></li>
<li class="d2"><svg><use href="#gcmd"/></svg><span>Общие команды</span></li>
<li class="d2"><svg><use href="#gfold"/></svg><span>Группы команд</span></li>
<li class="d2"><svg><use href="#layout"/></svg><span>Общие макеты</span></li>
<li class="d2"><svg><use href="#pic"/></svg><span>Общие картинки</span></li>
<li class="d2 dim"><svg><use href="#xdto"/></svg><span>XDTO-пакеты</span></li>
<li class="d2 dim"><svg><use href="#websvc"/></svg><span>Web-сервисы</span></li>
<li class="d2"><svg><use href="#wsref"/></svg><span>WS-ссылки</span></li>
<li class="d2 dim"><svg><use href="#style"/></svg><span>Элементы стиля</span></li>
<li class="d2"><svg class="ex"><use href="#plus"/></svg><svg><use href="#lang"/></svg><span>Языки</span></li>
<li class="d1"><svg><use href="#const"/></svg><span>Константы</span></li>
<li class="d1"><svg><use href="#ref"/></svg><span>Справочники</span></li>
<li class="d1"><svg class="ex"><use href="#plus"/></svg><svg><use href="#docs"/></svg><span>Документы</span></li>
<li class="d1"><svg><use href="#journal"/></svg><span>Журналы документов</span></li>
<li class="d1"><svg><use href="#enum"/></svg><span>Перечисления</span></li>
<li class="d1 dim"><svg><use href="#report"/></svg><span>Отчеты</span></li>
<li class="d1"><svg><use href="#proc"/></svg><span>Обработки</span></li>
<li class="d1 dim"><svg><use href="#chars"/></svg><span>Планы видов характеристик</span></li>
<li class="d1 dim"><svg><use href="#tt"/></svg><span>Планы счетов</span></li>
<li class="d1 dim"><svg><use href="#calc"/></svg><span>Планы видов расчета</span></li>
<li class="d1"><svg><use href="#reginf"/></svg><span>Регистры сведений</span></li>
<li class="d1"><svg><use href="#regacc"/></svg><span>Регистры накопления</span></li>
<li class="d1 dim"><svg><use href="#regtt"/></svg><span>Регистры бухгалтерии</span></li>
<li class="d1 dim"><svg><use href="#regcalc"/></svg><span>Регистры расчета</span></li>
<li class="d1 dim"><svg><use href="#bproc"/></svg><span>Бизнес-процессы</span></li>
<li class="d1 dim"><svg><use href="#tasks"/></svg><span>Задачи</span></li>
<li class="d1 dim"><svg><use href="#ext"/></svg><span>Внешние источники данных</span></li>
</ul>
<div class="hscroll"><button class="dimc" aria-label="Влево"><svg><use href="#al"/></svg></button><i class="thumb"></i><i class="track"></i><button aria-label="Вправо"><svg><use href="#ar"/></svg></button></div>
</div>
</section>

<section class="mdi">
<article class="win win-start">
<h2 class="wtitle"><svg><use href="#doc"/></svg><span>Рабочая область начальной страницы</span></h2>
<div class="wbody start">
<div class="tmpl"><label for="tmpl">Шаблон начальной страницы:</label><span class="combo"><select id="tmpl"><option>Две колонки одинаковой ширины</option></select><span class="cb"><svg><use href="#dd"/></svg></span></span></div>
<div class="cols">
<div class="col"><div class="cap">Левая колонка:</div>
<div class="ctools"><button class="tb" aria-label="Добавить"><svg><use href="#add"/></svg></button><button class="tb" aria-label="Создать"><svg><use href="#docadd"/></svg></button><button class="tb" aria-label="Удалить"><svg><use href="#del"/></svg></button><button class="tb" aria-label="Вверх"><svg><use href="#up"/></svg></button><button class="tb" aria-label="Вниз"><svg><use href="#down"/></svg></button></div>
<div class="grid"><table><colgroup><col><col class="c2"><col class="c3"></colgroup><thead><tr><th>Форма</th><th>Высота</th><th>Видимость</th></tr></thead><tbody><tr><td>ОбщаяФорма.РабочийСтол</td><td class="num">10</td><td><span class="vis"><input type="checkbox" id="vis" aria-label="Видимость" checked><a href="#">Одинаковая</a></span></td></tr></tbody></table></div></div>
<div class="move"><button>&gt;</button><button>&lt;</button></div>
<div class="col"><div class="cap">Правая колонка:</div>
<div class="ctools"><button class="tb" aria-label="Добавить"><svg><use href="#add"/></svg></button><button class="tb off" aria-label="Создать"><svg><use href="#docadd"/></svg></button><button class="tb off" aria-label="Удалить"><svg><use href="#del"/></svg></button><button class="tb" aria-label="Вверх"><svg><use href="#up"/></svg></button><button class="tb" aria-label="Вниз"><svg><use href="#down"/></svg></button></div>
<div class="grid"><table><colgroup><col><col class="c2"><col class="c3"></colgroup><thead><tr><th>Форма</th><th>Высота</th><th>Видимость</th></tr></thead></table></div></div>
</div>
</div>
</article>

<article class="win win-form">
<h2 class="wtitle"><svg><use href="#winf"/></svg><span>Конфигурация orders: РабочийСтол</span><button class="wb" aria-label="Свернуть"><svg><use href="#mini"/></svg></button><button class="wb" aria-label="Развернуть"><svg><use href="#maxi"/></svg></button><button class="wb" aria-label="Закрыть"><svg><use href="#close"/></svg></button></h2>
<div class="wbody editor">
<div class="panes">
<div class="pane">
<div class="pbox"><div class="ftools"><button class="tb" aria-label="Добавить"><svg><use href="#add"/></svg></button><button class="tb" aria-label="Изменить"><svg><use href="#pencil"/></svg></button><button class="tb" aria-label="Удалить"><svg><use href="#del"/></svg></button><i class="sep"></i><button class="tb off" aria-label="Вверх"><svg><use href="#up"/></svg></button><button class="tb off" aria-label="Вниз"><svg><use href="#down"/></svg></button><i class="sep"></i><button class="tb" aria-label="Проверить"><svg><use href="#formgo"/></svg></button></div>
<ul class="tree"><li><svg><use href="#formb"/></svg><span>Форма</span></li><li class="d1"><svg><use href="#cmdbar"/></svg><span>Командная панель</span></li><li class="d1 sel"><svg><use href="#label"/></svg><span>НадписьПриветМир</span></li></ul></div>
<div class="tabs"><button class="tab on"><svg class="red"><use href="#stack"/></svg>Элементы</button><button class="tab"><svg class="green"><use href="#stack"/></svg>Команд...</button></div>
</div>
<div class="pane">
<div class="pbox"><div class="ftools"><button class="tb" aria-label="Добавить реквизит"><svg><use href="#attradd"/></svg></button><button class="tb off" aria-label="Добавить колонку"><svg><use href="#coladd"/></svg></button><i class="sep"></i><button class="tb off" aria-label="Изменить"><svg><use href="#pencil"/></svg></button><button class="tb off" aria-label="Удалить"><svg><use href="#del"/></svg></button></div>
<table class="attrs"><colgroup><col><col class="ci"><col class="ct"></colgroup><thead><tr><th>Реквизит</th><th><svg><use href="#formb"/></svg></th><th>Тип</th></tr></thead></table>
<div class="hs2"><button aria-label="Влево"><svg><use href="#cl"/></svg></button><i class="thumb"></i><i class="track"></i><button aria-label="Вправо"><svg><use href="#cr"/></svg></button></div></div>
<div class="tabs"><button class="tab on"><svg class="blue"><use href="#stack"/></svg>Реквизи...</button><button class="tab"><svg class="yellow"><use href="#stack"/></svg>Команды</button><button class="tab"><svg class="brown"><use href="#stack"/></svg>Парамет...</button></div>
</div>
</div>
<div class="canvas"><div class="mock"><div class="mhead"></div><div class="mfield"><span>Привет МИР!</span></div></div></div>
<div class="tabs low"><button class="tab on"><svg><use href="#formb"/></svg>Форма</button><button class="tab"><svg><use href="#text"/></svg>Модуль</button></div>
</div>
</article>
</section>

<section class="panel props">
<h2 class="ptitle"><span>Свойства</span><button class="tb" aria-label="Закрепить"><svg><use href="#pin"/></svg></button><button class="tc" aria-label="Закрыть"><svg><use href="#close"/></svg></button></h2>
<div class="ptools"><button class="tb" aria-label="По алфавиту"><svg><use href="#az"/></svg></button><button class="tb pressed" aria-label="По категориям"><svg><use href="#cat"/></svg></button><button class="tb" aria-label="Отбор"><svg><use href="#filt2"/></svg></button><i class="sep"></i><button class="tb off" aria-label="Отменить"><svg><use href="#del"/></svg></button><button class="tb" aria-label="Применить"><svg><use href="#ok"/></svg></button></div>
<div class="pscroll">
<div class="plist">
<h3><svg><use href="#dd"/></svg>Основные:</h3>
<div class="row near"><label for="p1">Имя</label><span class="combo"><input id="p1" value="orders"></span></div>
<div class="row near"><label for="p2">Синоним</label><span class="combo"><input id="p2" value="Заказы"></span></div>
<div class="row near"><label for="p3">Комментарий</label><span class="combo"><input id="p3" value="1С:Заказы"></span></div>
<hr>
<div class="row dim"><label for="p4">Основной режим запуска</label><span class="combo"><select id="p4" disabled><option>Управляемое приложение</option></select><span class="cb"><svg><use href="#dd"/></svg></span></span></div>
<div class="row"><label for="p5">Назначения использования</label><span class="combo"><input id="p5" value="Мобильное устройство"><button aria-label="Выбрать"><svg><use href="#dots"/></svg></button></span></div>
<div class="row"><label for="p6">Вариант встроенного языка</label><span class="combo"><select id="p6"><option>Русский</option></select><span class="cb"><svg><use href="#dd"/></svg></span></span></div>
<div class="row dim"><label for="p7">Основные роли</label><span class="combo"><input id="p7" disabled><button aria-label="Выбрать"><svg><use href="#dots"/></svg></button><button aria-label="Очистить"><svg><use href="#xs"/></svg></button></span></div>
<div class="row lk"><span>Модуль управляемого приложения</span><a href="#">Открыть</a></div>
<div class="row lk"><span>Модуль сеанса</span><a href="#">Открыть</a></div>
<div class="row lk dim"><span>Модуль внешнего соединения</span><a href="#">Открыть</a></div>
<div class="row dim"><label for="p8">Дополнительные словари полнотекстового поиска</label><span class="combo"><input id="p8" disabled><button aria-label="Выбрать"><svg><use href="#dots"/></svg></button><button aria-label="Очистить"><svg><use href="#xs"/></svg></button></span></div>
<hr>
<div class="row dim"><label for="p9">Хранилище общих настроек</label><span class="combo"><input id="p9" disabled><button aria-label="Выбрать"><svg><use href="#dots"/></svg></button><button aria-label="Очистить"><svg><use href="#xs"/></svg></button></span></div>
<div class="row dim"><label for="p10">Хранилище пользовательских настроек отчетов</label><span class="combo"><input id="p10" disabled><button aria-label="Выбрать"><svg><use href="#dots"/></svg></button><button aria-label="Очистить"><svg><use href="#xs"/></svg></button></span></div>
<div class="row dim"><label for="p11">Хранилище вариантов отчетов</label><span class="combo"><input id="p11" disabled><button aria-label="Выбрать"><svg><use href="#dots"/></svg></button><button aria-label="Очистить"><svg><use href="#xs"/></svg></button></span></div>
<div class="row dim"><label for="p12">Хранилище настроек данных форм</label><span class="combo"><input id="p12" disabled><button aria-label="Выбрать"><svg><use href="#dots"/></svg></button><button aria-label="Очистить"><svg><use href="#xs"/></svg></button></span></div>
<div class="row dim"><label for="p13">Хранилище пользовательских настроек списков</label><span class="combo"><input id="p13" disabled><button aria-label="Выбрать"><svg><use href="#dots"/></svg></button><button aria-label="Очистить"><svg><use href="#xs"/></svg></button></span></div>
<h3><svg><use href="#dd"/></svg>Представление:</h3>
<div class="row lk dim"><span>Командный интерфейс</span><a href="#">Открыть</a></div>
<div class="row lk marked"><span>Рабочая область начальной страницы</span><a href="#">Открыть</a><b class="callout"></b></div>
<div class="row lk"><span>Командный интерфейс основного раздела</span><a href="#">Открыть</a></div>
<div class="row lk dim"><span>Картинка основного раздела</span><a href="#">Открыть</a></div>
<div class="row lk dim"><span>Интерфейс клиентского приложения</span><a href="#">Открыть</a></div>
<hr>
<div class="row"><label for="p14">Основной язык</label><span class="combo"><input id="p14" value="Русский"><button aria-label="Выбрать"><svg><use href="#dots"/></svg></button></span></div>
<div class="row"><label for="p15">Краткая информация</label><span class="combo"><input id="p15"></span></div>
<div class="row tall"><label for="p16">Подробная информация</label><textarea id="p16"></textarea></div>
<div class="row lk"><span>Логотип</span><a href="#">Открыть</a></div>
<div class="row lk dim"><span>Заставка</span><a href="#">Открыть</a></div>
<div class="row"><label for="p17">Авторские права</label><span class="combo"><input id="p17"></span></div>
<div class="row"><label for="p18">Адрес информации о поставщике</label><span class="combo"><input id="p18"></span></div>
<div class="row"><label for="p19">Адрес информации о конфигурации</label><span class="combo"><input id="p19"></span></div>
<hr>
<div class="row dim"><label for="p20">Основная форма отчета</label><span class="combo"><input id="p20" disabled><button aria-label="Выбрать"><svg><use href="#dots"/></svg></button><button aria-label="Очистить"><svg><use href="#xs"/></svg></button><button aria-label="Найти"><svg><use href="#mag"/></svg></button></span></div>
<div class="row dim"><label for="p21">Основная форма настроек отчета</label><span class="combo"><input id="p21" disabled><button aria-label="Выбрать"><svg><use href="#dots"/></svg></button><button aria-label="Очистить"><svg><use href="#xs"/></svg></button><button aria-label="Найти"><svg><use href="#mag"/></svg></button></span></div>
<div class="row dim"><label for="p22">Основная форма варианта отчета</label><span class="combo"><input id="p22" disabled><button aria-label="Выбрать"><svg><use href="#dots"/></svg></button><button aria-label="Очистить"><svg><use href="#xs"/></svg></button><button aria-label="Найти"><svg><use href="#mag"/></svg></button></span></div>
<div class="row dim"><label for="p23">Основная форма констант</label><span class="combo"><input id="p23" disabled><button aria-label="Выбрать"><svg><use href="#dots"/></svg></button><button aria-label="Очистить"><svg><use href="#xs"/></svg></button><button aria-label="Найти"><svg><use href="#mag"/></svg></button></span></div>
</div>
<div class="vscroll"><button class="dimc" aria-label="Вверх"><svg><use href="#au"/></svg></button><i class="thumb"></i><i class="track"></i><button aria-label="Вниз"><svg><use href="#ad"/></svg></button></div>
</div>
<div class="hint">Рабочая область начальной страницы</div>
</section>

<aside class="side"><button class="vtab"><svg><use href="#wadd"/></svg><span>Дополнительно: orders</span></button></aside>
</main>

<footer class="bottom">
<div class="wtabs"><button class="wt"><svg><use href="#winf"/></svg>Конфигураци...: РабочийСтол</button><button class="wt cur"><svg><use href="#doc"/></svg>Рабочая область начально...</button></div>
<div class="status"><i></i><i></i><i></i><i></i></div>
</footer>
</body>
</html>
```
FILE: styles.css
```css
* { box-sizing: border-box; }
body {
  margin: 0;
  height: 100vh;
  display: flex;
  flex-direction: column;
  overflow: hidden;
  background: #f5f2dd;
  color: #3f2f00;
  font: 11px/14px "Liberation Sans", Arial, sans-serif;
  border-right: 1px solid #a8926e;
}
svg { width: 16px; height: 16px; flex: none; display: block; }
.defs { position: absolute; width: 0; height: 0; }
button, input, select, textarea { font: inherit; color: inherit; margin: 0; padding: 0; border: 0; background: none; border-radius: 0; }
button { display: flex; align-items: center; justify-content: center; }
a { color: inherit; }
h2, h3, ul { margin: 0; padding: 0; font-size: 12px; list-style: none; }
.dimc { color: #c3bda4; }

/* top area */
.strip { height: 4px; background: #c49e76; border-bottom: 1px solid #a8835c; flex: none; }
.top { flex: none; height: 75px; padding-top: 1px; }
.menu { display: grid; height: 22px; align-items: center; grid-template-columns: 16px 44px 50px 81px 53px 115px 52px 41px auto; justify-content: start; }
.menu a { text-decoration: none; white-space: nowrap; }
.grip { width: 3px; height: 13px; margin: 0 1px 0 3px; flex: none; background: repeating-linear-gradient(#aaa07a 0 1px, transparent 1px 2px); }
.bar { display: flex; align-items: center; height: 26px; }
.bar .grip { margin-right: 2px; }
.tb { width: 23px; height: 20px; flex: none; }
.off svg { opacity: .6; filter: grayscale(.5); }
.more { width: 16px; padding: 12px 2px 0 0; }
.more svg { width: 14px; }
.sep { width: 1px; height: 18px; margin: 0 2px; flex: none; background: #cfc9a8; }
.combo { display: flex; height: 19px; border: 1px solid #b3a97c; border-radius: 4px; background: #fff; overflow: hidden; min-width: 0; color: #000; }
.combo input, .combo select { flex: 1; min-width: 0; width: 0; padding: 1px 2px 0; appearance: none; outline: 0; opacity: 1; }
.combo button, .cb { width: 15px; flex: none; display: flex; align-items: center; justify-content: center; border-left: 1px solid #c5bc92; background: linear-gradient(#fdfbef, #ece6c8); color: #5c4700; }
.combo button svg, .cb svg { width: 14px; height: 14px; }
.search { width: 150px; }

/* layout of the work area */
.work { flex: 1; min-height: 0; display: grid; grid-template-columns: 229px minmax(0, 1fr) 380px 24px; }
.panel { display: flex; flex-direction: column; min-height: 0; min-width: 0; }
.ptitle { height: 18px; flex: none; display: flex; align-items: center; background: #b0b0b0; color: #6b6b6b; padding-left: 4px; }
.ptitle span { flex: 1; }
.ptitle .tb { width: 16px; }
.tc { width: 19px; }
.ptools { height: 24px; flex: none; display: flex; align-items: center; }
.act { width: 66px; padding-left: 4px; justify-content: flex-start; }
.act svg { width: 13px; height: 13px; }
.treebox { flex: 1; min-height: 0; display: flex; flex-direction: column; border: 1px solid #b3a97c; background: #fff; overflow: hidden; }
.treebox .tree { flex: 1; min-height: 0; overflow: hidden; }
.tree { color: #000; font-size: 11px; }
.tree li { height: 19px; display: flex; align-items: center; padding-left: 4px; white-space: nowrap; position: relative; }
.tree li span { height: 19px; line-height: 20px; margin-left: 4px; padding: 0 2px; }
.tree li.d1 { padding-left: 23px; }
.tree li.d2 { padding-left: 42px; }
.tree li.d3 { padding-left: 61px; }
.tree .dim, .dim { color: #a58f5c; }
.tree .ex { width: 15px; height: 15px; margin: 0 4px 0 -19px; }
.tree .sel span { background: #6d98d0; color: #fff; }
.callout { position: absolute; border: 5px solid #00a2e8; }
.tree .marked { z-index: 1; }
.tree .callout { left: 51px; top: -6px; width: 116px; height: 30px; }
.hscroll { height: 16px; flex: none; display: flex; border-top: 1px solid #b3a97c; background: #faf8f2; }
.hscroll button { width: 21px; background: linear-gradient(#fbf9ec, #eee9cd); }
.hscroll button:last-child { border-left: 1px solid #c5bc92; color: #6b665a; }
.thumb { flex: 1; border: solid #c5bc92; border-width: 0 1px; background: linear-gradient(#f7f3dc, #ebe4c2); }
.hscroll .track { width: 17px; }

/* window canvas */
.mdi { position: relative; margin: 1px 5px 0 4px; overflow: hidden; background: #d9d3be; border: solid #6f6f6f; border-width: 1px 0 0 2px; border-bottom: 1px solid #dedede; }
.win { position: absolute; display: flex; flex-direction: column; border: 1px solid #777; border-left-color: #fff; border-top-color: #fff; padding: 0 2px 2px; }
.wtitle { height: 20px; flex: none; display: flex; align-items: center; padding: 0 2px 0 3px; color: #333; }
.wtitle span { flex: 1; margin-left: 3px; }
.wb { width: 20px; }
.wbody { flex: 1; min-height: 0; border: 1px solid #6f6f6f; background: #fcf9ea; }
.win-start { left: 9px; top: 0; width: 662px; height: 410px; background: #cbcbcb; }
.win-form { left: 6px; top: 417px; width: 498px; height: 365px; background: #b0b0b0; }
.win-form .wtitle { height: 22px; color: #666; }
.start { display: flex; flex-direction: column; padding: 5px 6px 6px; }
.tmpl { display: flex; align-items: center; height: 19px; }
.tmpl label { width: 159px; }
.tmpl .combo { width: 258px; color: #000; }
.cols { flex: 1; min-height: 0; display: flex; }
.col { width: 304px; display: flex; flex-direction: column; }
.cap { padding-top: 6px; height: 20px; }
.ctools { height: 24px; display: flex; align-items: center; }
.grid { flex: 1; border: 1px solid #b3a97c; background: #fff; }
table { width: 100%; table-layout: fixed; border-collapse: collapse; }
th { height: 20px; padding: 0 4px; text-align: left; font-weight: normal; color: #5c4700; background: linear-gradient(#fbf8ec, #eee8cc); border: solid #b3a97c; border-width: 0 0 1px 1px; overflow: hidden; }
th:first-child { border-left: 0; }
td { height: 20px; padding: 0 4px; color: #000; }
.c2 { width: 50px; }
.c3 { width: 92px; }
td.num { background: #5068c0; color: #fff; text-align: right; padding: 0 3px; outline: 1px dotted #fff; outline-offset: -1px; }
.vis { display: flex; align-items: center; }
.vis input { appearance: none; width: 13px; height: 13px; margin-right: 1px; border: 1px solid #b3a97c; border-radius: 2px; background: #fff url("data:image/svg+xml,%3Csvg xmlns='http://www.w3.org/2000/svg' viewBox='0 0 11 11'%3E%3Cpath d='M2.500 4.500l2 3 4-5' fill='none' stroke='%23222' stroke-width='2'/%3E%3C/svg%3E"); }
.move { width: 31px; padding: 66px 3px 0 4px; display: flex; flex-direction: column; gap: 6px; align-items: center; }
.move button { width: 22px; height: 22px; border: 1px solid #b3a97c; border-radius: 4px; background: linear-gradient(#fff, #efe9cf); color: #5c4700; }

/* form editor */
.editor { display: flex; flex-direction: column; padding: 0 1px; }
.panes { height: 214px; display: flex; gap: 6px; }
.pane { width: 194px; display: flex; flex-direction: column; }
.pane + .pane { flex: 1; width: auto; }
.pbox { height: 188px; display: flex; flex-direction: column; border: 1px solid #b3a97c; background: #fff; }
.ftools { height: 25px; display: flex; align-items: center; background: #fcf9ea; border-bottom: 1px solid #b3a97c; }
.ci { width: 24px; }
.ct { width: 105px; }
.attrs { flex: none; }
.hs2 { margin-top: auto; height: 16px; display: flex; padding: 1px; gap: 1px; }
.hs2 button { width: 18px; border: 1px solid #e8e1bd; background: #fbf8e6; }
.hs2 .thumb { border: 1px solid #e8e1bd; background: linear-gradient(#fbf8e6, #f1ecd0); }
.hs2 .track { width: 41px; }
.tabs { display: flex; gap: 6px; margin-top: -1px; }
.tab { height: 21px; min-width: 90px; gap: 2px; padding: 0 8px; border: 1px solid #cbc29a; border-top-color: #b3a97c; border-radius: 0 0 6px 6px; background: #ebe5cb; }
.tab.on { border-color: #b3a97c; border-top-color: #fcf9ea; background: #fcf9ea; box-shadow: inset 0 -2px #f7dfa4; }
.red { color: #dc3a26; } .green { color: #459a20; } .blue { color: #5683a6; } .yellow { color: #dba51c; } .brown { color: #995a38; }
.canvas { flex: 1; background: #fff; border: solid #b3a97c; border-width: 1px 0; padding: 4px; }
.mock { width: 176px; height: 78px; border: 1px solid #000; background: #fcf9ea; box-shadow: 3px 3px #4a4a4a; }
.mhead { height: 23px; background: linear-gradient(90deg, #bccad8, #d7e4f2); }
.mfield { margin: 9px 14px 0 9px; height: 34px; padding: 1px; border: 2px solid #1e90ff; }
.mfield span { display: block; width: 142px; height: 25px; background: #f00; color: #000; font: bold 22px/25px "Liberation Sans", Arial, sans-serif; white-space: nowrap; }
.low { height: 21px; padding-left: 2px; gap: 0; }
.low .tab { min-width: 76px; }

/* properties */
.props .ptools { border-bottom: 1px solid #b3a97c; height: 25px; padding-left: 1px; }
.pressed { background: #ebe5cb; outline: 1px solid #b3a97c; }
.pscroll { flex: 1; min-height: 0; display: flex; background: #fff; }
.plist { flex: 1; min-width: 0; overflow: hidden; padding: 0 2px 0 11px; }
h3 { height: 18px; display: flex; align-items: center; color: #4f3c00; position: relative; box-shadow: inset 0 -1px #fff, inset 0 -2px #dcd8c0; }
h3 svg { width: 13px; height: 13px; margin-left: -13px; color: #000; }
.row { height: 20px; display: grid; grid-template-columns: 184px minmax(0, 1fr); column-gap: 2px; position: relative; }
.row.near { grid-template-columns: 72px minmax(0, 1fr); }
.row > :first-child { overflow: hidden; white-space: nowrap; line-height: 19px; }
.row.lk { height: 18px; }
.row.lk > * { line-height: 18px; }
.row.tall { height: 96px; }
.row.tall textarea { height: 95px; border: 1px solid #b3a97c; border-radius: 4px; background: #fff; resize: none; }
.dim .combo { border-color: #d6d0b4; color: #8d8d8d; }
.dim .combo button, .dim .cb { background: #f5f2dd; border-color: #dcd7bd; color: #a19b85; }
.marked > span:first-child { color: #fff; }
.row.marked { z-index: 1; }
.row.marked > span:first-child { background: #5068c0; }
.row .callout { left: -7px; top: -4px; width: 268px; height: 24px; }
hr { height: 1px; border: 0; background: #dcd8c0; margin: 6px 2px 6px 0; }
.vscroll { width: 16px; display: flex; flex-direction: column; border-left: 1px solid #b3a97c; background: #faf8f2; }
.vscroll button { height: 21px; flex: none; border-bottom: 1px solid #c5bc92; background: #f5f2dd; }
.vscroll button:last-child { border: solid #c5bc92; border-width: 1px 0 0; color: #6b665a; }
.vscroll .thumb { flex: 542; border-width: 0 0 1px; background: linear-gradient(90deg, #f7f4e2, #e6dfbb); }
.vscroll .track { flex: 205; }
.hint { height: 51px; flex: none; border: 1px solid #b3a97c; border-radius: 4px; background: #fcf9ea; padding: 3px 2px; color: #000; }
.side { padding: 1px 0 0 1px; }
.vtab { width: 22px; height: 143px; flex-direction: column; justify-content: flex-start; gap: 4px; padding-top: 3px; border: 1px solid #b3a97c; }
.vtab span { writing-mode: vertical-rl; }

/* bottom */
.bottom { flex: none; }
.wtabs { height: 24px; display: flex; gap: 1px; padding: 2px 0; }
.wt { height: 20px; gap: 1px; padding: 0 1px; border: 1px solid #b3a97c; background: #b0b0b0; color: #222; white-space: nowrap; }
.wt.cur { background: #b2cce8; padding: 0 4px 0 1px; }
.status { height: 2px; display: flex; gap: 5px; padding-right: 30px; }
.status i { width: 30px; border: 1px solid #dcd8c0; border-bottom: 0; }
.status i:first-child { flex: 1; }
```
